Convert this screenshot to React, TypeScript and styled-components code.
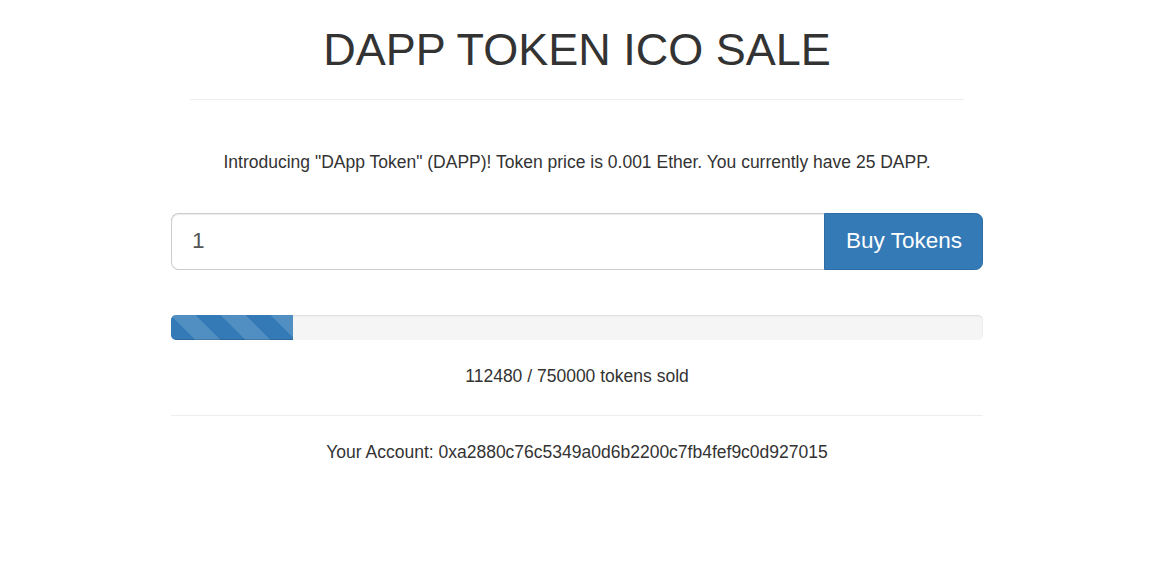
import React from "react";
import styled, { createGlobalStyle } from "styled-components";

const GlobalStyle = createGlobalStyle`
  html, body { margin: 0; padding: 0; background: #fff; }
  body {
    font-family: "Liberation Sans", Arial, sans-serif;
    font-size: 17.5px;
    line-height: 25px;
    color: #333;
  }
  * { box-sizing: border-box; }
`;

const Main = styled.main`
  width: 812px;
  margin-left: 171px;
  display: flex;
  flex-direction: column;
`;

const Header = styled.header`
  display: flex;
  flex-direction: column;
`;

const Title = styled.h1`
  margin: 25px 0 0;
  font-size: 45px;
  line-height: 49.5px;
  font-weight: 500;
  text-align: center;
  color: #333;
`;

const Rule = styled.hr<{ $inset?: number; $top: number }>`
  margin: ${(p) => p.$top}px ${(p) => p.$inset ?? 0}px 0;
  border: 0;
  border-top: 1px solid #eee;
  height: 0;
`;

const Text = styled.p<{ $top: number }>`
  margin: ${(p) => p.$top}px 0 0;
  text-align: center;
`;

const InputGroup = styled.form`
  margin-top: 38px;
  display: flex;
  height: 57px;
`;

const Input = styled.input`
  flex: 1;
  min-width: 0;
  height: 100%;
  padding: 0 20px;
  font-family: "Liberation Sans", Arial, sans-serif;
  font-size: 22.5px;
  color: #555;
  border: 1px solid #ccc;
  border-right: 0;
  border-radius: 7.5px 0 0 7.5px;
  box-shadow: inset 0 1px 1px rgba(0, 0, 0, 0.075);
  outline: none;
`;

const Button = styled.button`
  height: 100%;
  padding: 0 20px 0 21px;
  font-family: "Liberation Sans", Arial, sans-serif;
  font-size: 22.5px;
  color: #fff;
  background: #337ab7;
  border: 1px solid #2e6da4;
  border-radius: 0 7.5px 7.5px 0;
  cursor: pointer;
`;

const Progress = styled.div`
  margin-top: 45px;
  height: 25px;
  background: #f5f5f5;
  border-radius: 5px;
  overflow: hidden;
  box-shadow: inset 0 1px 2px rgba(0, 0, 0, 0.1);
  display: flex;
`;

const Bar = styled.div`
  height: 100%;
  background-color: #337ab7;
  background-image: linear-gradient(
    45deg,
    rgba(255, 255, 255, 0.15) 25%,
    transparent 25%,
    transparent 50%,
    rgba(255, 255, 255, 0.15) 50%,
    rgba(255, 255, 255, 0.15) 75%,
    transparent 75%,
    transparent
  );
  background-size: 50px 50px;
  box-shadow: inset 0 -1px 0 rgba(0, 0, 0, 0.15);
`;

export default function App() {
  const sold = 112480;
  const total = 750000;
  const pct = (sold / total) * 100;
  return (
    <>
      <GlobalStyle />
      <Main>
        <Header>
          <Title>DAPP TOKEN ICO SALE</Title>
          <Rule $top={24} $inset={19} />
        </Header>
        <Text $top={50}>
          Introducing "DApp Token" (DAPP)! Token price is 0.001 Ether. You currently have 25 DAPP.
        </Text>
        <InputGroup onSubmit={(e) => e.preventDefault()}>
          <Input type="number" defaultValue="1" />
          <Button type="submit">Buy Tokens</Button>
        </InputGroup>
        <Progress>
          <Bar style={{ width: `${pct}%` }} />
        </Progress>
        <Text $top={24.5}>
          {sold} / {total} tokens sold
        </Text>
        <Rule $top={25.5} />
        <Text $top={24.5}>
          Your Account: 0xa2880c76c5349a0d6b2200c7fb4fef9c0d927015
        </Text>
      </Main>
    </>
  );
}
